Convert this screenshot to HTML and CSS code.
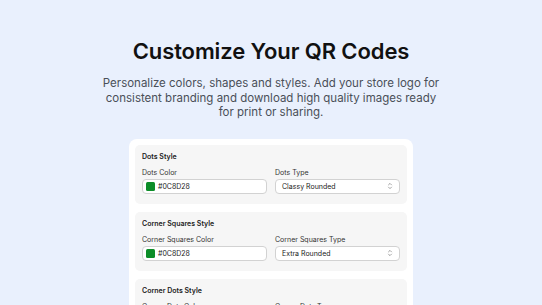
FILE: index.html
```html
<!DOCTYPE html>
<html lang="en">
<head>
    <meta charset="UTF-8">
    <meta name="viewport" content="width=device-width, initial-scale=1.0">
    <title>Customize Your QR Codes</title>
    <link rel="stylesheet" href="styles.css">
</head>
<body>
    <div class="page">
        <h1>Customize Your QR Codes</h1>
        <p class="intro">Personalize colors, shapes and styles. Add your store logo for consistent branding and download high quality images ready for print or sharing.</p>

        <div class="card">
            <div class="section">
                <h3>Dots Style</h3>
                <div class="row">
                    <div class="field">
                        <label>Dots Color</label>
                        <div class="input"><span class="swatch"></span>#0C8D28</div>
                    </div>
                    <div class="field">
                        <label>Dots Type</label>
                        <div class="input select">Classy Rounded
                            <svg class="chev" viewBox="0 0 8 10" width="6" height="8"><path d="M2 3.5L4 1.5L6 3.5M2 6.5L4 8.5L6 6.5" fill="none" stroke="#777" stroke-width="0.9" stroke-linecap="round" stroke-linejoin="round"/></svg>
                        </div>
                    </div>
                </div>
            </div>

            <div class="section">
                <h3>Corner Squares Style</h3>
                <div class="row">
                    <div class="field">
                        <label>Corner Squares Color</label>
                        <div class="input"><span class="swatch"></span>#0C8D28</div>
                    </div>
                    <div class="field">
                        <label>Corner Squares Type</label>
                        <div class="input select">Extra Rounded
                            <svg class="chev" viewBox="0 0 8 10" width="6" height="8"><path d="M2 3.5L4 1.5L6 3.5M2 6.5L4 8.5L6 6.5" fill="none" stroke="#777" stroke-width="0.9" stroke-linecap="round" stroke-linejoin="round"/></svg>
                        </div>
                    </div>
                </div>
            </div>

            <div class="section">
                <h3>Corner Dots Style</h3>
                <div class="row">
                    <div class="field">
                        <label>Corner Dots Color</label>
                        <div class="input"><span class="swatch"></span>#0C8D28</div>
                    </div>
                    <div class="field">
                        <label>Corner Dots Type</label>
                        <div class="input select">Dot
                            <svg class="chev" viewBox="0 0 8 10" width="6" height="8"><path d="M2 3.5L4 1.5L6 3.5M2 6.5L4 8.5L6 6.5" fill="none" stroke="#777" stroke-width="0.9" stroke-linecap="round" stroke-linejoin="round"/></svg>
                        </div>
                    </div>
                </div>
            </div>
        </div>
    </div>
</body>
</html>
```

FILE: styles.css
```css
body {
    margin: 0;
    background-color: #e9f0fd;
    font-family: Inter, "Noto Sans", sans-serif;
    color: #111;
    overflow: hidden;
}

.page {
    display: flex;
    flex-direction: column;
    align-items: center;
    padding-top: 37px;
}

h1 {
    margin: 0;
    font-size: 22px;
    font-weight: 600;
    line-height: 28px;
    letter-spacing: -0.1px;
}

.intro {
    margin: 11px 0 0;
    width: 345px;
    text-align: center;
    font-size: 11.5px;
    line-height: 14.5px;
    color: #4a4f58;
}

.card {
    margin-top: 19px;
    width: 272px;
    padding: 6px 6px;
    background: #fff;
    border-radius: 8px;
    display: flex;
    flex-direction: column;
    gap: 8px;
}

.section {
    background: #f6f6f6;
    border-radius: 5px;
    padding: 7px 7px 10px;
}

.section h3 {
    margin: 0 0 7px;
    font-size: 7px;
    line-height: 9px;
    font-weight: 600;
    color: #222;
}

.row {
    display: flex;
    gap: 8px;
}

.field {
    flex: 1;
    display: flex;
    flex-direction: column;
}

.field label {
    font-size: 7px;
    line-height: 9px;
    color: #333;
    margin-bottom: 2px;
}

.input {
    height: 13px;
    border: 1px solid #d2d2d2;
    border-radius: 4px;
    background: #fff;
    display: flex;
    align-items: center;
    padding: 0 3px;
    font-size: 7px;
    color: #222;
}

.swatch {
    width: 9px;
    height: 9px;
    border-radius: 1.5px;
    background: #0c8d28;
    margin-right: 3px;
}

.select {
    padding: 0 6px;
    justify-content: space-between;
}
```
